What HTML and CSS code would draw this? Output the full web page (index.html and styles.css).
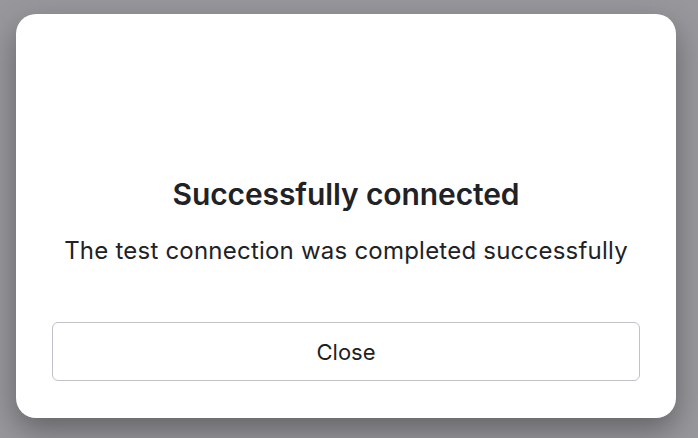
FILE: index.html
```html
<!DOCTYPE html>
<html lang="en">
<head>
<meta charset="utf-8">
<link rel="stylesheet" href="styles.css">
</head>
<body>
<div class="overlay">
  <div class="modal">
    <div class="content">
      <h2 class="title">Successfully connected</h2>
      <p class="desc">The test connection was completed successfully</p>
    </div>
    <button class="btn">Close</button>
  </div>
</div>
</body>
</html>
```
FILE: styles.css
```css
html, body {
  margin: 0;
  padding: 0;
  height: 100%;
}
body {
  background: #98979c;
  font-family: Inter, "Noto Sans", sans-serif;
  color: #1f1f22;
  overflow: hidden;
}
.overlay {
  padding: 14px 22px 20px 16px;
}
.modal {
  width: 660px;
  height: 404px;
  box-sizing: border-box;
  background: #fff;
  border-radius: 20px;
  box-shadow: 0 12px 30px rgba(0, 0, 0, 0.35);
  padding: 0 36px 37px;
  display: flex;
  flex-direction: column;
}
.content {
  flex: 1;
  display: flex;
  flex-direction: column;
  align-items: center;
  justify-content: flex-start;
  padding-top: 162px;
}
.title {
  margin: 0;
  font-size: 30px;
  font-weight: 600;
  line-height: 36px;
  letter-spacing: -0.1px;
  color: #222225;
}
.desc {
  margin: 24px 0 0;
  font-size: 24px;
  font-weight: 400;
  line-height: 30px;
  letter-spacing: 0.22px;
  color: #222225;
}
.btn {
  height: 59px;
  width: 100%;
  background: #fff;
  border: 1px solid #c2c1ca;
  border-radius: 6px;
  font-family: Inter, "Noto Sans", sans-serif;
  font-size: 22px;
  color: #1f1f22;
  cursor: pointer;
}
```
